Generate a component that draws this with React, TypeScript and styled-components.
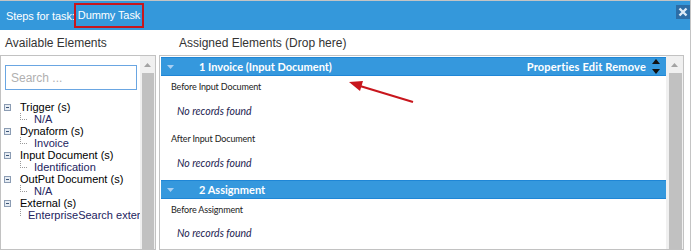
import styled, { createGlobalStyle } from "styled-components";

const GlobalStyle = createGlobalStyle`
  body {
    margin: 0;
    background: #fff;
    font-family: "Liberation Sans", Arial, sans-serif;
  }
`;

const Frame = styled.div`
  position: relative;
  width: 691px;
  height: 251px;
  box-sizing: border-box;
  border-top: 1px solid #c4c4c4;
  border-right: 1px solid #c4c4c4;
  background: #fff;
  overflow: hidden;
`;

const TitleBar = styled.div`
  display: flex;
  align-items: center;
  height: 29px;
  padding-left: 6px;
  background: #3498db;
  color: #fff;
  font-size: 11px;
  letter-spacing: -0.1px;
`;

const Highlight = styled.span`
  margin-left: -1px;
  padding: 3px 2px 4px 2px;
  border: 2px solid #c8161d;
  line-height: 14px;
`;

const CloseButton = styled.div`
  display: flex;
  align-items: center;
  justify-content: center;
  align-self: flex-start;
  width: 14px;
  height: 14px;
  margin: 4px 0 0 auto;
  background: #2c6da6;
`;

const Columns = styled.div`
  display: grid;
  grid-template-columns: 156px 525px;
  column-gap: 3px;
`;

const Column = styled.div`
  display: flex;
  flex-direction: column;
`;

const ColumnTitle = styled.div<{ $indent: number }>`
  height: 25px;
  line-height: 26px;
  padding-left: ${(p) => p.$indent}px;
  font-size: 12px;
  color: #333;
`;

const Panel = styled.div`
  display: flex;
  height: 195px;
  box-sizing: border-box;
  border: 1px solid #c2c2c2;
`;

const PanelContent = styled.div<{ $pad: string }>`
  flex: 1;
  min-width: 0;
  overflow: hidden;
  padding: ${(p) => p.$pad};
`;

const ScrollTrack = styled.div<{ $width: number; $thumbGap: string }>`
  display: flex;
  flex-direction: column;
  width: ${(p) => p.$width}px;
  background: #f0f0f0;

  & > div:last-child {
    flex: 1;
    margin: ${(p) => p.$thumbGap};
    background: #c1c1c1;
  }
`;

const ScrollArrow = styled.div`
  display: flex;
  align-items: center;
  justify-content: center;
  height: 17px;
`;

const SearchInput = styled.input`
  display: block;
  width: 132px;
  height: 25px;
  box-sizing: border-box;
  margin: 9px 0 0 4px;
  padding: 0 5px;
  border: 1px solid #6aa6e2;
  outline: none;
  font-family: "Liberation Sans", Arial, sans-serif;
  font-size: 12px;
  &::placeholder {
    color: #b0b0b0;
  }
`;

const Tree = styled.div`
  margin-top: 11px;
  font-size: 11px;
  line-height: 12px;
  white-space: nowrap;
`;

const TreeRow = styled.div`
  display: flex;
  align-items: center;
  height: 12px;
`;

const ToggleBox = styled.span`
  position: relative;
  width: 5px;
  height: 5px;
  margin: 0 9px 0 3px;
  border: 1px solid #8b9cb3;
  background: #e6ecf3;
  &::after {
    content: "";
    position: absolute;
    left: 1px;
    top: 2px;
    width: 3px;
    height: 1px;
    background: #3b5578;
  }
`;

const Connector = styled.span`
  align-self: flex-start;
  width: 6px;
  height: 6px;
  margin: 0 7px 0 19px;
  border-left: 1px dotted #9a9a9a;
  border-bottom: 1px dotted #9a9a9a;
`;

const ParentLabel = styled.span`
  color: #000;
`;

const ChildLabel = styled.span`
  color: #23235e;
`;

const SectionHeader = styled.div`
  display: flex;
  align-items: center;
  height: 17px;
  border-top: 1px solid #1f86d6;
  border-bottom: 1px solid #1f86d6;
  background: #3598dd;
  padding: 0 6px;
  color: #fff;
  font-family: Lato, "Liberation Sans", sans-serif;
  font-weight: 700;
  font-size: 11px;
`;

const SectionTitle = styled.span`
  margin-left: 25px;
`;

const Actions = styled.div`
  display: flex;
  align-items: center;
  gap: 6px;
  margin-left: auto;
  letter-spacing: 0.2px;
`;

const Section = styled.div`
  padding-bottom: 10px;
`;

const StepLabel = styled.div<{ $top: number }>`
  margin-top: ${(p) => p.$top}px;
  padding-left: 10px;
  line-height: 14px;
  font-family: Lato, "Liberation Sans", sans-serif;
  font-size: 9px;
  letter-spacing: -0.15px;
  color: #222;
`;

const EmptyText = styled.div<{ $top: number }>`
  margin-top: ${(p) => p.$top}px;
  padding-left: 16px;
  line-height: 14px;
  font-family: Lato, "Liberation Sans", sans-serif;
  font-style: italic;
  font-size: 10.5px;
  color: #1c1c50;
`;

const Annotation = styled.svg`
  position: absolute;
  left: 0;
  top: 0;
  pointer-events: none;
`;

const UpTriangle = ({ color }: { color: string }) => (
  <svg width="7" height="4" viewBox="0 0 7 4">
    <polygon points="0,4 7,4 3.5,0" fill={color} />
  </svg>
);

const Scrollbar = ({ width, thumbGap }: { width: number; thumbGap: string }) => (
  <ScrollTrack $width={width} $thumbGap={thumbGap}>
    <ScrollArrow>
      <UpTriangle color="#a3a3a3" />
    </ScrollArrow>
    <div />
  </ScrollTrack>
);

const tree = [
  { name: "Trigger (s)", items: ["N/A"] },
  { name: "Dynaform (s)", items: ["Invoice"] },
  { name: "Input Document (s)", items: ["Identification"] },
  { name: "OutPut Document (s)", items: ["N/A"] },
  { name: "External (s)", items: ["EnterpriseSearch external"] },
];

type StepSection = {
  title: string;
  actions: boolean;
  steps: { label: string; gap: number; emptyGap: number }[];
};

const sections: StepSection[] = [
  {
    title: "1 Invoice (Input Document)",
    actions: true,
    steps: [
      { label: "Before Input Document", gap: 4, emptyGap: 10 },
      { label: "After Input Document", gap: 14, emptyGap: 10 },
    ],
  },
  {
    title: "2 Assignment",
    actions: false,
    steps: [{ label: "Before Assignment", gap: 4, emptyGap: 9 }],
  },
];

export default function App() {
  return (
    <>
      <GlobalStyle />
      <Frame>
        <TitleBar>
          Steps for task: <Highlight>Dummy Task</Highlight>
          <CloseButton>
            <svg width="10" height="10" viewBox="0 0 10 10">
              <path d="M1.5 1.5 L8.5 8.5 M8.5 1.5 L1.5 8.5" stroke="#dcebf7" strokeWidth="2.4" />
            </svg>
          </CloseButton>
        </TitleBar>
        <Columns>
          <Column>
            <ColumnTitle $indent={5}>Available Elements</ColumnTitle>
            <Panel>
              <PanelContent $pad="0">
                <SearchInput placeholder="Search ..." />
                <Tree>
                  {tree.map((group) => (
                    <div key={group.name}>
                      <TreeRow>
                        <ToggleBox />
                        <ParentLabel>{group.name}</ParentLabel>
                      </TreeRow>
                      {group.items.map((item) => (
                        <TreeRow key={item}>
                          <Connector />
                          <ChildLabel>{item}</ChildLabel>
                        </TreeRow>
                      ))}
                    </div>
                  ))}
                </Tree>
              </PanelContent>
              <Scrollbar width={15} thumbGap="0 1px 0 2px" />
            </Panel>
          </Column>
          <Column>
            <ColumnTitle $indent={20}>Assigned Elements (Drop here)</ColumnTitle>
            <Panel>
              <PanelContent $pad="1px 0 0 1px">
                {sections.map((section) => (
                  <Section key={section.title}>
                    <SectionHeader>
                      <svg width="7" height="4" viewBox="0 0 7 4">
                        <polygon points="0,0 7,0 3.5,4" fill="#a9cff2" />
                      </svg>
                      <SectionTitle>{section.title}</SectionTitle>
                      {section.actions ? (
                        <Actions>
                          <span>Properties Edit Remove</span>
                          <svg width="8" height="15" viewBox="0 0 8 15">
                            <polygon points="0,5 8,5 4,0" fill="#111" />
                            <polygon points="0,10 8,10 4,15" fill="#111" />
                          </svg>
                        </Actions>
                      ) : null}
                    </SectionHeader>
                    {section.steps.map((step) => (
                      <div key={step.label}>
                        <StepLabel $top={step.gap}>{step.label}</StepLabel>
                        <EmptyText $top={step.emptyGap}>No records found</EmptyText>
                      </div>
                    ))}
                  </Section>
                ))}
              </PanelContent>
              <Scrollbar width={17} thumbGap="0 1px 0 3px" />
            </Panel>
          </Column>
        </Columns>
        <Annotation width="691" height="251">
          <line x1="413" y1="101" x2="360" y2="85" stroke="#c8161d" strokeWidth="2" />
          <polygon points="349,81 363,80 360,90" fill="#c8161d" />
        </Annotation>
      </Frame>
    </>
  );
}
